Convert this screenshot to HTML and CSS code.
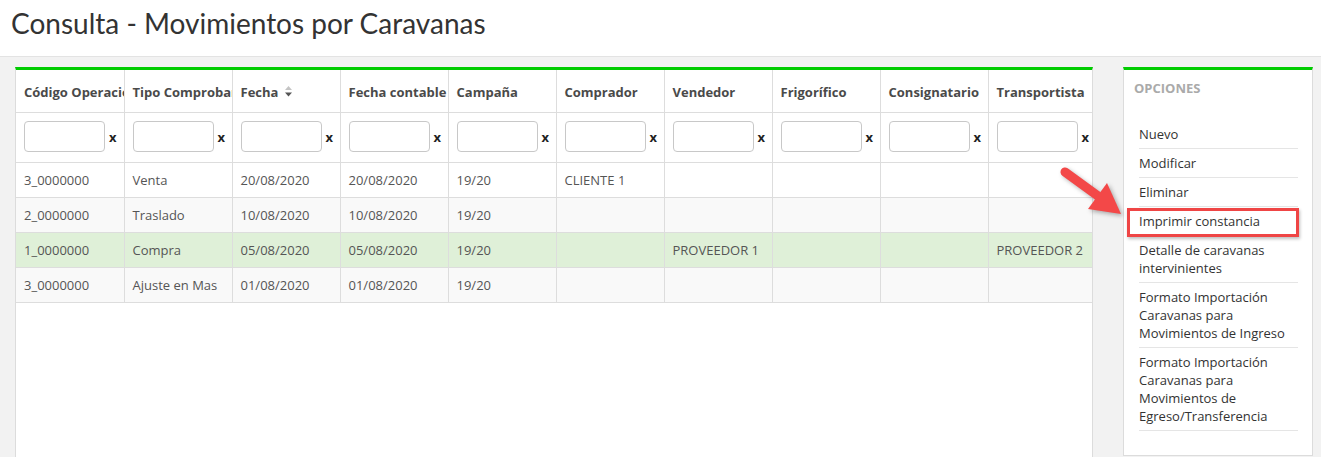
FILE: index.html
```html
<!DOCTYPE html>
<html lang="es">
<head>
<meta charset="utf-8">
<title>Consulta - Movimientos por Caravanas</title>
<link rel="stylesheet" href="styles.css">
</head>
<body>
<header class="page-header">
  <h1 class="page-title">Consulta - Movimientos por Caravanas</h1>
</header>
<main class="content">
  <section class="panel grid-panel">
    <table class="grid">
      <colgroup>
        <col class="c"><col class="c"><col class="c"><col class="c"><col class="c">
        <col class="c"><col class="c"><col class="c"><col class="c"><col class="c-last">
      </colgroup>
      <thead>
        <tr class="head-row">
          <th>Código Operación</th>
          <th>Tipo Comprobante</th>
          <th>Fecha <svg class="sort" width="7" height="11" viewBox="0 0 7 11"><path d="M3.5 0 L7 4 L0 4 Z" fill="#c4c4c4"/><path d="M0 6.5 L7 6.5 L3.5 10.5 Z" fill="#555"/></svg></th>
          <th>Fecha contable</th>
          <th>Campaña</th>
          <th>Comprador</th>
          <th>Vendedor</th>
          <th>Frigorífico</th>
          <th>Consignatario</th>
          <th>Transportista</th>
        </tr>
        <tr class="filter-row">
          <td><div class="filter"><input type="text"><span class="clear">x</span></div></td>
          <td><div class="filter"><input type="text"><span class="clear">x</span></div></td>
          <td><div class="filter"><input type="text"><span class="clear">x</span></div></td>
          <td><div class="filter"><input type="text"><span class="clear">x</span></div></td>
          <td><div class="filter"><input type="text"><span class="clear">x</span></div></td>
          <td><div class="filter"><input type="text"><span class="clear">x</span></div></td>
          <td><div class="filter"><input type="text"><span class="clear">x</span></div></td>
          <td><div class="filter"><input type="text"><span class="clear">x</span></div></td>
          <td><div class="filter"><input type="text"><span class="clear">x</span></div></td>
          <td><div class="filter"><input type="text"><span class="clear">x</span></div></td>
        </tr>
      </thead>
      <tbody>
        <tr>
          <td>3_0000000</td><td>Venta</td><td>20/08/2020</td><td>20/08/2020</td><td>19/20</td>
          <td>CLIENTE 1</td><td></td><td></td><td></td><td></td>
        </tr>
        <tr class="alt">
          <td>2_0000000</td><td>Traslado</td><td>10/08/2020</td><td>10/08/2020</td><td>19/20</td>
          <td></td><td></td><td></td><td></td><td></td>
        </tr>
        <tr class="selected">
          <td>1_0000000</td><td>Compra</td><td>05/08/2020</td><td>05/08/2020</td><td>19/20</td>
          <td></td><td>PROVEEDOR 1</td><td></td><td></td><td>PROVEEDOR 2</td>
        </tr>
        <tr class="alt">
          <td>3_0000000</td><td>Ajuste en Mas</td><td>01/08/2020</td><td>01/08/2020</td><td>19/20</td>
          <td></td><td></td><td></td><td></td><td></td>
        </tr>
      </tbody>
    </table>
  </section>

  <aside class="panel options-panel">
    <h2 class="options-title">OPCIONES</h2>
    <ul class="options">
      <li>Nuevo</li>
      <li>Modificar</li>
      <li>Eliminar</li>
      <li class="highlighted">Imprimir constancia<span class="callout-box"></span></li>
      <li>Detalle de caravanas intervinientes</li>
      <li>Formato Importación Caravanas para Movimientos de Ingreso</li>
      <li>Formato Importación Caravanas para Movimientos de Egreso/Transferencia</li>
    </ul>
  </aside>

  <svg class="callout-arrow" width="80" height="64" viewBox="0 0 80 64">
    <line x1="15" y1="12" x2="48" y2="36" stroke="#f34848" stroke-width="9" stroke-linecap="round"/>
    <polygon points="71,54 38,49 57,23" fill="#f34848"/>
  </svg>
</main>
</body>
</html>
```
FILE: styles.css
```css
* { box-sizing: border-box; }

html, body {
  margin: 0;
  padding: 0;
}

body {
  background: #f2f2f2;
  font-family: "Open Sans", "Noto Sans", sans-serif;
  font-size: 13px;
  color: #555;
  height: 457px;
  overflow: hidden;
}

.page-header {
  background: #fff;
  height: 57px;
  border-bottom: 1px solid #e3e3e3;
  padding: 4px 11px 0;
}

.page-title {
  margin: 0;
  font-family: Lato, "Open Sans", sans-serif;
  font-weight: 400;
  font-size: 28px;
  line-height: 38px;
  color: #333;
}

.content {
  position: relative;
  display: flex;
  align-items: flex-start;
  gap: 30px;
  padding: 10px 8px 0 15px;
}

.panel {
  background: #fff;
  border: 1px solid #dcdcdc;
  border-top: 3px solid #00cc00;
}

.grid-panel {
  width: 1078px;
  height: 420px;
}

.grid {
  border-collapse: collapse;
  table-layout: fixed;
  width: 1076px;
}

.grid col.c { width: 108px; }
.grid col.c-last { width: 104px; }

.grid th,
.grid td {
  border: 1px solid #ddd;
  white-space: nowrap;
  overflow: hidden;
  text-align: left;
  padding: 8px 8px;
  line-height: 18px;
}

.grid tr > :first-child { border-left: none; }
.grid tr > :last-child { border-right: none; }
.grid thead tr:first-child > * { border-top: none; }

.grid th {
  font-weight: 700;
  color: #4a4a4a;
  padding: 13px 3px 10px 8px;
  height: 42px;
  text-overflow: clip;
}

.sort {
  vertical-align: 0px;
  margin-left: 3px;
}

.filter-row td {
  padding: 8px 8px 9px;
  height: 50px;
}

.filter {
  display: flex;
  align-items: center;
  gap: 4px;
}

.filter input {
  width: 81px;
  height: 31px;
  border: 1px solid #c8c8c8;
  border-radius: 4px;
  padding: 0 6px;
  font: inherit;
  background: #fff;
  flex: none;
}

.clear {
  font-weight: 700;
  color: #222;
  font-size: 13px;
}

.grid tbody td {
  height: 35px;
  color: #555;
}

.grid tbody tr.alt td { background: #f9f9f9; }
.grid tbody tr.selected td { background: #dff0d8; }

.options-panel {
  width: 190px;
  height: 389px;
  padding: 0 14px 0 15px;
}

.options-title {
  margin: 0 0 0 -5px;
  padding: 9px 0 10px;
  font-size: 13px;
  line-height: 18px;
  font-weight: 700;
  color: #aaa;
}

.options {
  list-style: none;
  margin: 13px 0 0;
  padding: 0;
}

.options li {
  position: relative;
  padding: 5px 0;
  line-height: 18px;
  color: #333;
  border-bottom: 1px solid #e5e5e5;
}

.callout-box {
  position: absolute;
  left: -12px;
  top: 1px;
  right: -1px;
  bottom: -2px;
  border: 3px solid #ef4545;
  box-shadow: 1px 2px 3px rgba(0, 0, 0, 0.25);
}

.callout-arrow {
  position: absolute;
  left: 1050px;
  top: 103px;
  filter: drop-shadow(2px 2px 2px rgba(0, 0, 0, 0.3));
}
```
